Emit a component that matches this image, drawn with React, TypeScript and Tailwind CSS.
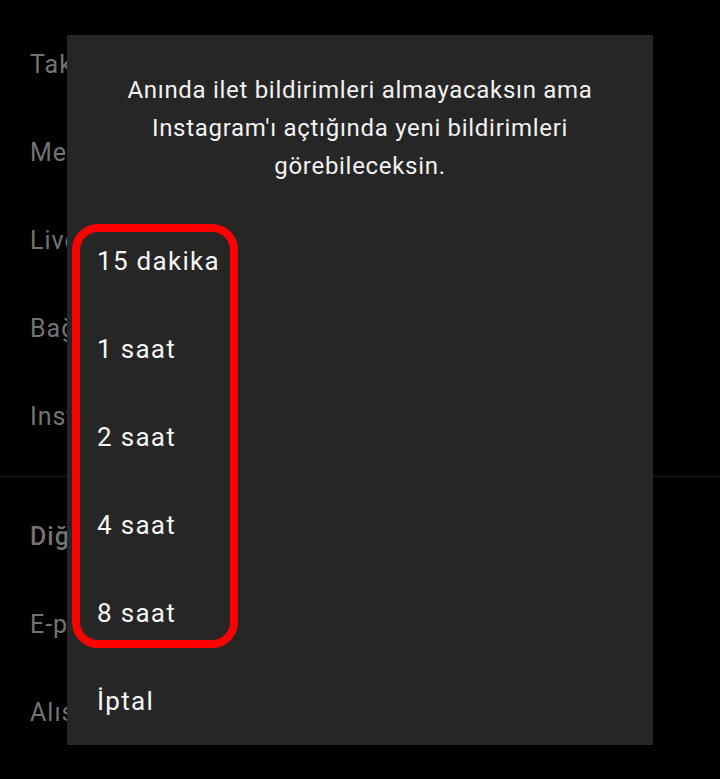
import React from 'react';

const behind = [
  { label: 'Takip Ettiklerin ve Takipçilerin' },
  { label: 'Mesajlar' },
  { label: 'Live ve Reels' },
  { label: 'Bağış Kampanyaları' },
  { label: "Instagram'dan" },
];

const behindMore = [
  { label: 'Diğer Bildirim Türleri', bold: true },
  { label: 'E-posta Bildirimleri' },
  { label: 'Alışveriş' },
];

const options = ['15 dakika', '1 saat', '2 saat', '4 saat', '8 saat', 'İptal'];

export default function App() {
  return (
    <div
      className="relative w-[720px] h-[779px] overflow-hidden bg-black"
      style={{ fontFamily: 'Roboto, "Liberation Sans", sans-serif' }}
    >
      {/* Settings list behind the dialog (only its left edge shows) */}
      <div className="flex flex-col pt-[21px]">
        {behind.map((r) => (
          <div key={r.label} className="h-[88px] flex items-center">
            <div className="w-[67px] overflow-hidden pl-[30px] text-[25px] tracking-[1px] text-[#737373] whitespace-nowrap">
              {r.label}
            </div>
          </div>
        ))}
        <div className="mt-[15px] mb-[16px] h-px bg-[#1c1c1c]" />
        {behindMore.map((r) => (
          <div key={r.label} className="h-[88px] flex items-center">
            <div
              className={`w-[67px] overflow-hidden pl-[30px] text-[25px] tracking-[1px] text-[#737373] whitespace-nowrap ${r.bold ? 'font-medium' : ''}`}
            >
              {r.label}
            </div>
          </div>
        ))}
      </div>

      {/* Dialog */}
      <div className="absolute left-[67px] top-[35px] w-[586px] h-[710px] bg-[#262626] flex flex-col">
        <div className="pt-[36px] pb-[32px] px-[20px] text-center text-[24px] tracking-[0.7px] leading-[38px] text-[#f2f2f2]">
          Anında ilet bildirimleri almayacaksın ama
          <br />
          Instagram'ı açtığında yeni bildirimleri
          <br />
          görebileceksin.
        </div>
        <div className="h-px bg-[#333333]" />
        <div className="flex flex-col">
          {options.map((o) => (
            <div key={o} className="h-[88px] flex items-center pl-[30px] text-[26px] tracking-[1.3px] text-[#f5f5f5]">
              {o}
            </div>
          ))}
        </div>

        {/* Red highlight annotation */}
        <div className="absolute left-[5px] top-[189px] w-[166px] h-[424px] border-[8px] border-[#ff0000] rounded-[26px] pointer-events-none" />
      </div>
    </div>
  );
}
